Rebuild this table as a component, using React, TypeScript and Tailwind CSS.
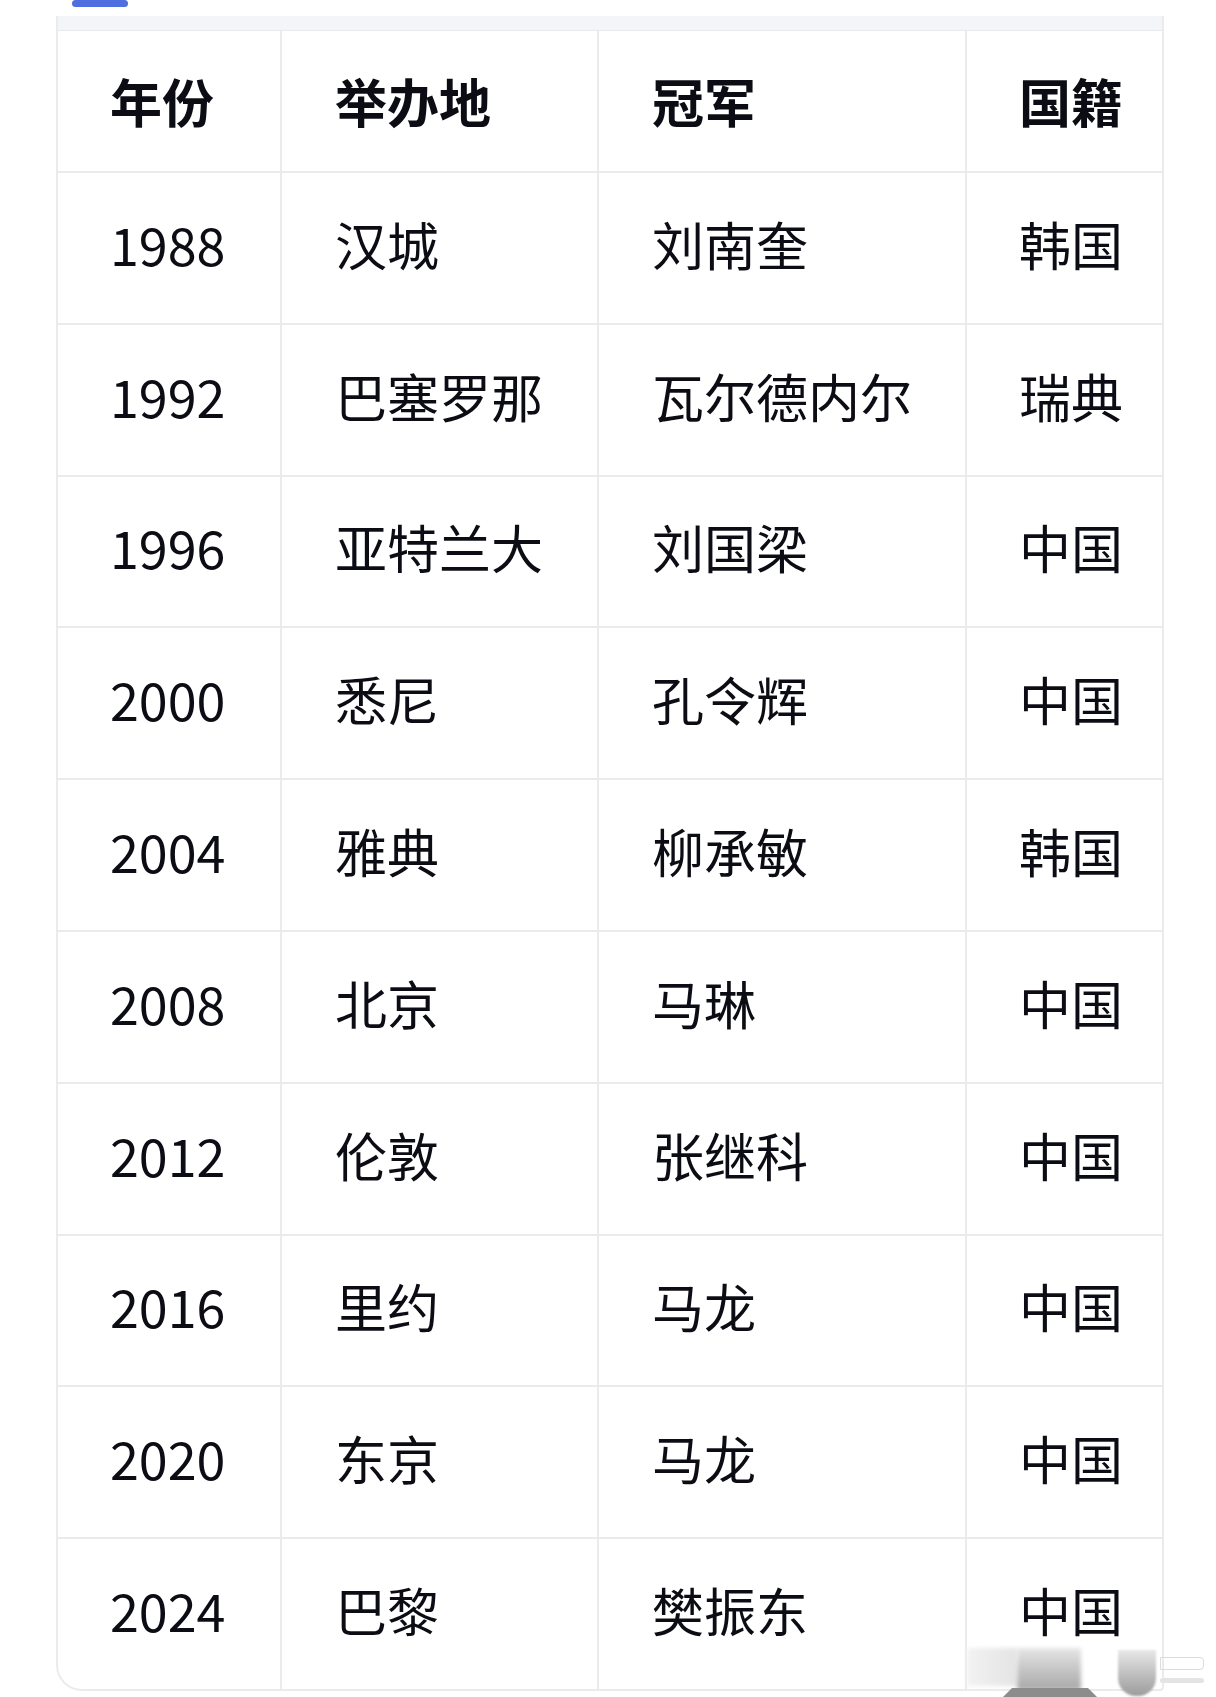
import React from "react";

const rows: [string, string, string, string][] = [
  ["1988", "汉城", "刘南奎", "韩国"],
  ["1992", "巴塞罗那", "瓦尔德内尔", "瑞典"],
  ["1996", "亚特兰大", "刘国梁", "中国"],
  ["2000", "悉尼", "孔令辉", "中国"],
  ["2004", "雅典", "柳承敏", "韩国"],
  ["2008", "北京", "马琳", "中国"],
  ["2012", "伦敦", "张继科", "中国"],
  ["2016", "里约", "马龙", "中国"],
  ["2020", "东京", "马龙", "中国"],
  ["2024", "巴黎", "樊振东", "中国"],
];

const font = { fontFamily: '"Noto Sans CJK SC", "Noto Sans", sans-serif' };

export default function App() {
  return (
    <div className="relative w-[1216px] h-[1697px] bg-white overflow-hidden" style={font}>
      <div className="h-[16px] pl-[72px]">
        <div className="w-[56px] h-[7px] rounded-full bg-[#4f6ee0]" />
      </div>
      <div className="ml-[56px] w-[1108px] border-l-2 border-r-2 border-b-2 border-[#ebebee] rounded-bl-[26px] rounded-br-[4px] overflow-hidden">
        <div className="h-[15px] bg-[#f4f5f9] border-b border-[#e9eaef]" />
        <div className="grid grid-cols-[224px_317px_368px_1fr] h-[142px] border-b-2 border-[#ebebee] text-[52px] font-bold text-[#0c0d14]">
          <div className="border-r-2 border-[#ebebee] pl-[52px] flex items-center">年份</div>
          <div className="border-r-2 border-[#ebebee] pl-[53px] flex items-center">举办地</div>
          <div className="border-r-2 border-[#ebebee] pl-[53px] flex items-center">冠军</div>
          <div className="pl-[52px] flex items-center">国籍</div>
        </div>
        {rows.map((r, i) => (
          <div
            key={i}
            className={
              i === rows.length - 1
                ? "grid grid-cols-[224px_317px_368px_1fr] h-[150px] text-[52px] text-[#0c0d14]"
                : "grid grid-cols-[224px_317px_368px_1fr] h-[151.8px] border-b-2 border-[#ebebee] text-[52px] text-[#0c0d14]"
            }
          >
            <div className="border-r-2 border-[#ebebee] pl-[52px] flex items-center pb-[8px]">{r[0]}</div>
            <div className="border-r-2 border-[#ebebee] pl-[53px] flex items-center pb-[8px]">{r[1]}</div>
            <div className="border-r-2 border-[#ebebee] pl-[53px] flex items-center pb-[8px]">{r[2]}</div>
            <div className="pl-[52px] flex items-center pb-[8px]">{r[3]}</div>
          </div>
        ))}
      </div>
      {/* blurred watermark */}
      <div className="absolute left-[967px] top-[1648px] w-[50px] h-[38px] bg-gradient-to-r from-[#f2f2f2] to-[#e4e4e4] blur-[2px]" />
      <div className="absolute left-[1017px] top-[1648px] w-[64px] h-[42px] bg-gradient-to-b from-[#e6e6e6] to-[#a8a8a8] blur-[2px]" />
      <div className="absolute left-[1000px] top-[1688px] w-[100px] h-[12px] bg-[#8c8c8c] [clip-path:polygon(12%_0,88%_0,100%_100%,0_100%)]" />
      <div className="absolute left-[1118px] top-[1650px] w-[38px] h-[46px] rounded-b-[18px] bg-gradient-to-b from-[#e8e8e8] to-[#9c9c9c] blur-[1px]" />
      <div className="absolute left-[1160px] top-[1657px] w-[44px] h-[13px] border border-[#dcdcdc] rounded-r-[4px]" />
      <div className="absolute left-[1160px] top-[1678px] w-[44px] h-[5px] bg-[#e4e4e4] rounded-full" />
    </div>
  );
}
